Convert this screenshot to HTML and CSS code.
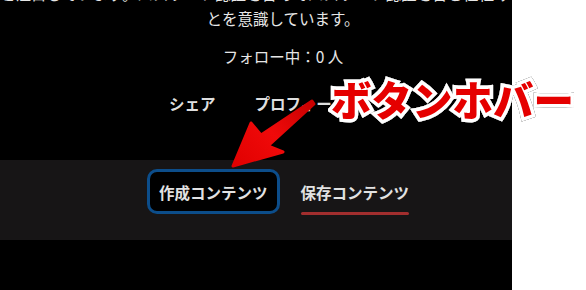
FILE: index.html
```html
<!DOCTYPE html>
<html lang="ja">
<head>
<meta charset="utf-8">
<title>ボタンホバー</title>
<link rel="stylesheet" href="styles.css">
</head>
<body>
<div class="page">
  <main class="panel">
    <div class="column">
      <p class="bio">
        <span class="bio-line">と注目しています。パスワード認証を含めてパスワード認証を含む仕組みも分かるこ</span>
        <span class="bio-line">とを意識しています。</span>
      </p>
      <p class="follow">フォロー中：0 人</p>
      <nav class="links">
        <a class="link" href="#">シェア</a>
        <a class="link" href="#">プロフィール</a>
      </nav>
    </div>
    <div class="band">
      <div class="column tabs">
        <button class="tab tab-hover"><span class="tab-label">作成コンテンツ</span></button>
        <button class="tab tab-active"><span class="tab-label">保存コンテンツ</span></button>
      </div>
    </div>
  </main>
  <svg class="arrow" width="586" height="290" viewBox="0 0 586 290" aria-hidden="true">
    <defs>
      <linearGradient id="ag" x1="313" y1="102" x2="233" y2="166" gradientUnits="userSpaceOnUse">
        <stop offset="0" stop-color="#c80000"/>
        <stop offset="0.5" stop-color="#f00a0a"/>
        <stop offset="1" stop-color="#e00000"/>
      </linearGradient>
    </defs>
    <polygon points="233,166 251,123 261,135 312,101 314,104 268,146 283,152" fill="url(#ag)" stroke="url(#ag)" stroke-width="3" stroke-linejoin="round"/>
  </svg>
  <div class="callout">ボタンホバー</div>
</div>
</body>
</html>
```

FILE: styles.css
```css
* { box-sizing: border-box; }

html, body {
  margin: 0;
  padding: 0;
  background: #ffffff;
}

body {
  font-family: "Noto Sans CJK JP", "Noto Sans", sans-serif;
}

.page {
  position: relative;
  width: 586px;
  height: 290px;
  overflow: hidden;
}

.panel {
  width: 512px;
  height: 290px;
  background: #000000;
  overflow: hidden;
  display: flex;
  flex-direction: column;
}

.column {
  width: 566px;
  flex: none;
}

.bio {
  margin: -19px 0 0;
  color: #e6e6e6;
  font-size: 15.5px;
  line-height: 25px;
  text-align: center;
}

.bio-line {
  display: block;
  white-space: nowrap;
}

.follow {
  margin: 13px 0 0;
  color: #e6e6e6;
  font-size: 15.5px;
  line-height: 24px;
  text-align: center;
}

.links {
  display: flex;
  gap: 39px;
  margin-top: 23px;
  padding-left: 169px;
}

.link {
  color: #dedede;
  font-size: 15.5px;
  font-weight: 700;
  line-height: 24px;
  text-decoration: none;
}

.band {
  margin-top: 45px;
  height: 80px;
  background: #171516;
  overflow: hidden;
}

.tabs {
  display: flex;
  justify-content: center;
  gap: 9px;
  padding: 9px 0 0 2px;
}

.tab {
  display: flex;
  align-items: center;
  height: 45px;
  padding: 0 9px;
  border: 3px solid transparent;
  border-radius: 10px;
  background: transparent;
  color: #e2e2e2;
  font-family: inherit;
  font-size: 15.5px;
  font-weight: 700;
  cursor: pointer;
}

.tab-hover {
  border-color: #0c4d8a;
  background: #000000;
}

.tab-label {
  position: relative;
  line-height: 22px;
}

.tab-active .tab-label::after {
  content: "";
  position: absolute;
  left: 0;
  right: 0;
  bottom: -12px;
  height: 3px;
  border-radius: 2px;
  background: #a22e2e;
}

.arrow {
  position: absolute;
  left: 0;
  top: 0;
}

.callout {
  position: absolute;
  left: 331px;
  top: 79px;
  color: #e50000;
  font-size: 40.5px;
  font-weight: 900;
  line-height: 1;
  white-space: nowrap;
  -webkit-text-stroke: 7px #ffffff;
  paint-order: stroke fill;
  filter: drop-shadow(0 0 0.6px #777777) drop-shadow(0 0 0.4px #999999);
}
```
